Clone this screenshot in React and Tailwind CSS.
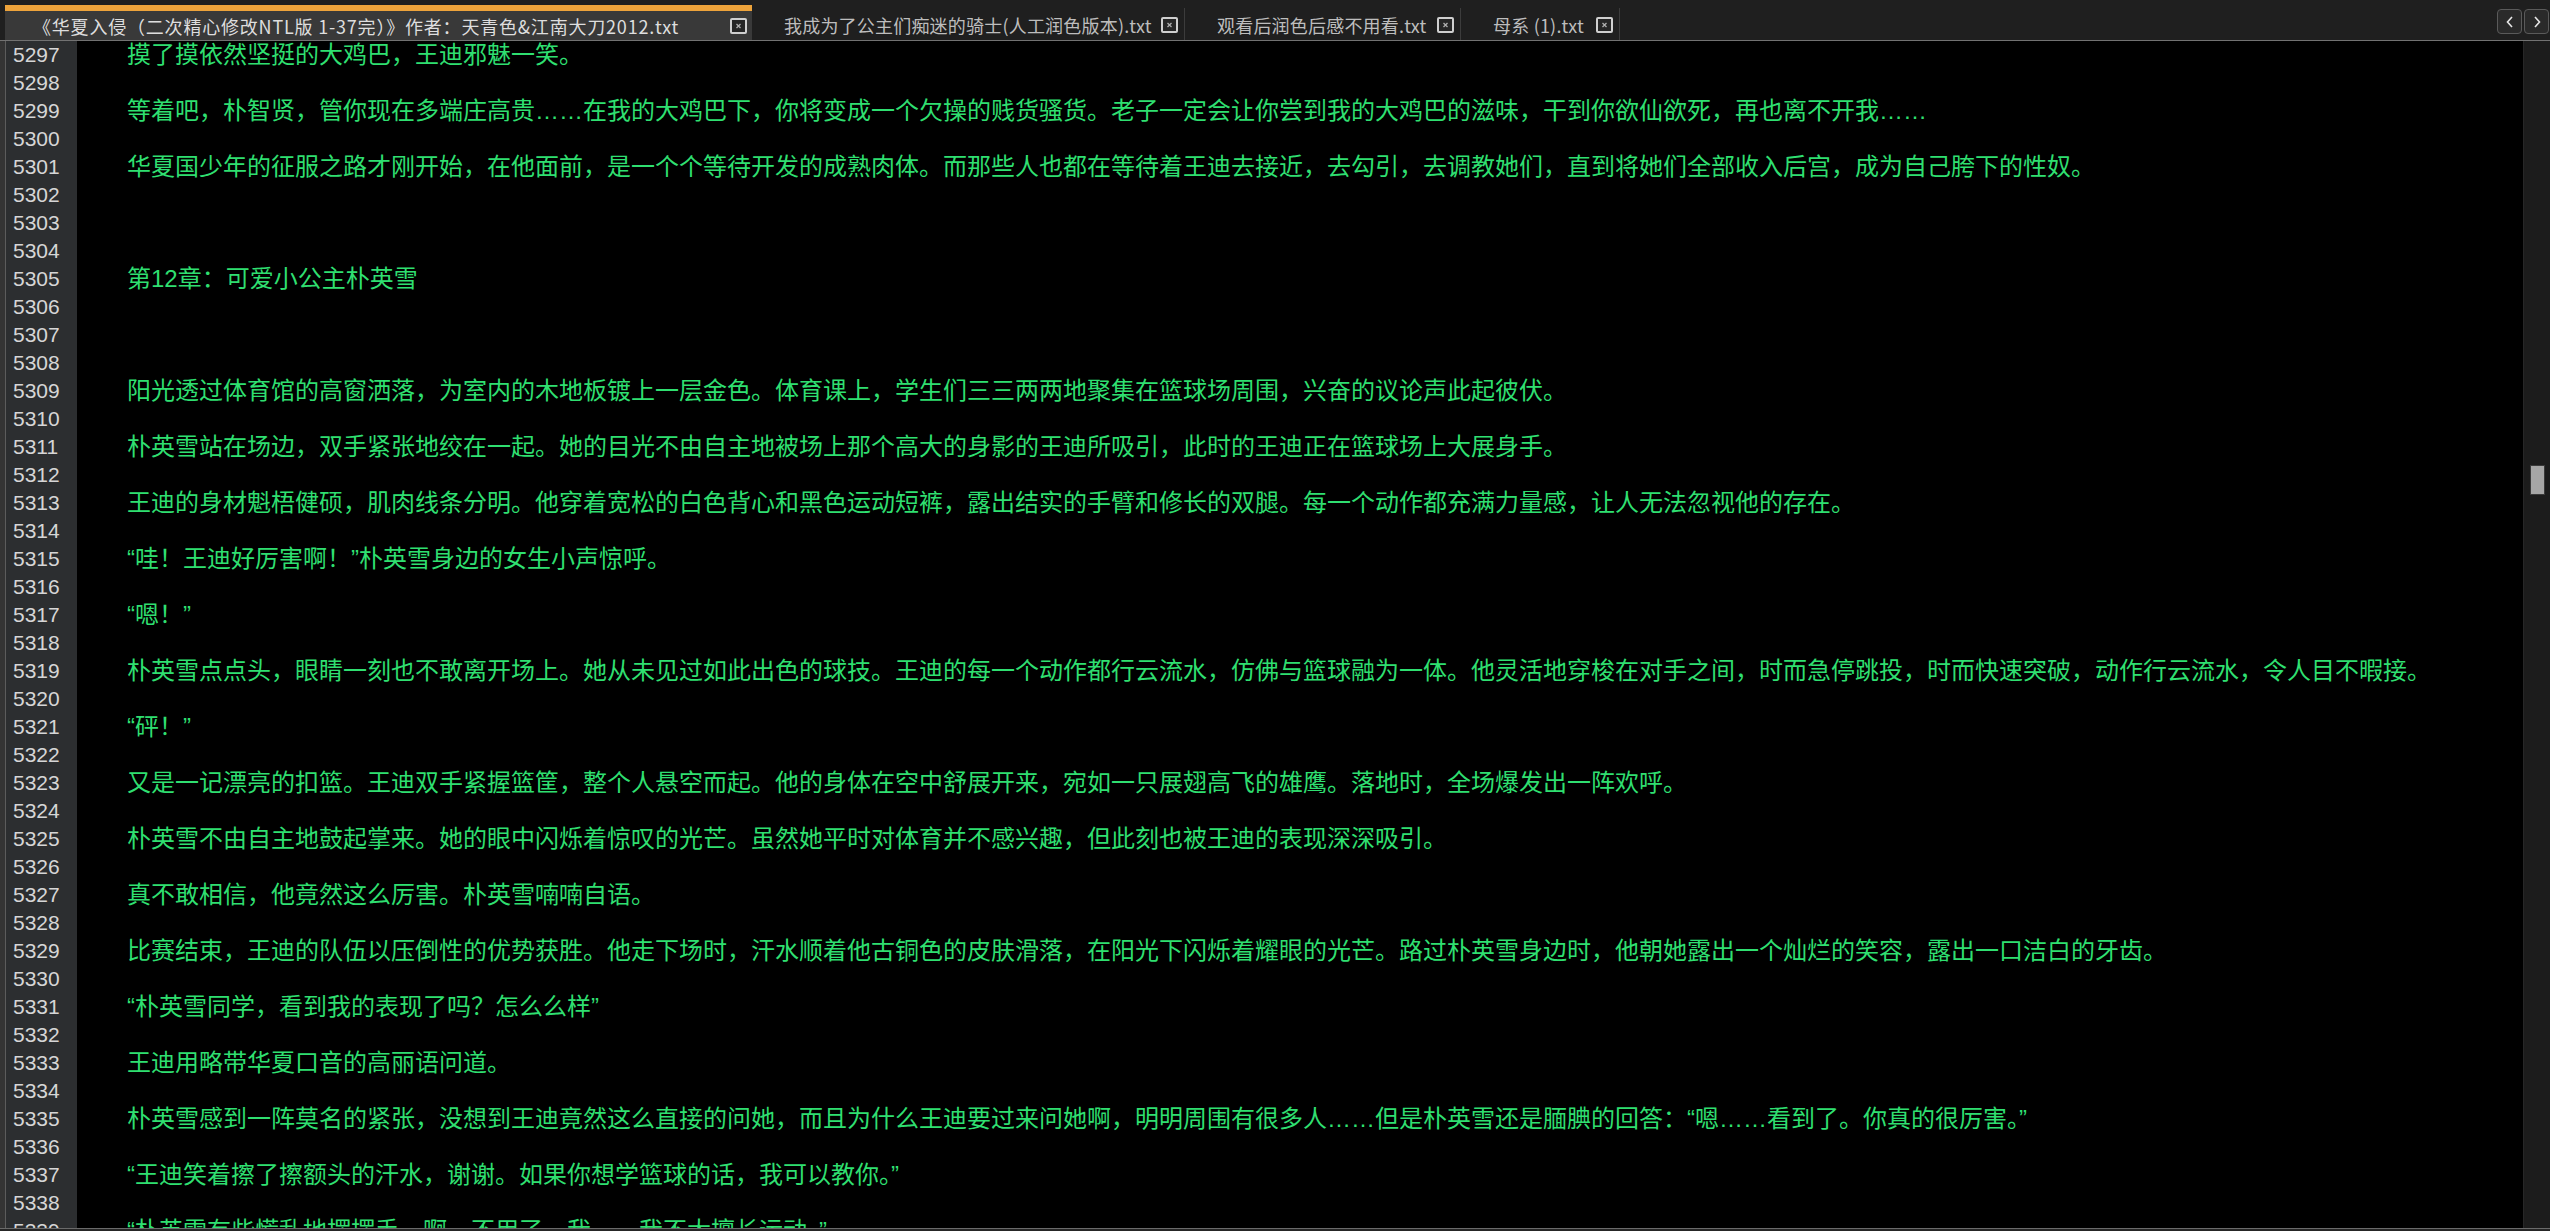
import React from "react";

const LINES = [
  "摸了摸依然坚挺的大鸡巴，王迪邪魅一笑。",
  "",
  "等着吧，朴智贤，管你现在多端庄高贵……在我的大鸡巴下，你将变成一个欠操的贱货骚货。老子一定会让你尝到我的大鸡巴的滋味，干到你欲仙欲死，再也离不开我……",
  "",
  "华夏国少年的征服之路才刚开始，在他面前，是一个个等待开发的成熟肉体。而那些人也都在等待着王迪去接近，去勾引，去调教她们，直到将她们全部收入后宫，成为自己胯下的性奴。",
  "",
  "",
  "",
  "第12章：可爱小公主朴英雪",
  "",
  "",
  "",
  "阳光透过体育馆的高窗洒落，为室内的木地板镀上一层金色。体育课上，学生们三三两两地聚集在篮球场周围，兴奋的议论声此起彼伏。",
  "",
  "朴英雪站在场边，双手紧张地绞在一起。她的目光不由自主地被场上那个高大的身影的王迪所吸引，此时的王迪正在篮球场上大展身手。",
  "",
  "王迪的身材魁梧健硕，肌肉线条分明。他穿着宽松的白色背心和黑色运动短裤，露出结实的手臂和修长的双腿。每一个动作都充满力量感，让人无法忽视他的存在。",
  "",
  "“哇！王迪好厉害啊！”朴英雪身边的女生小声惊呼。",
  "",
  "“嗯！”",
  "",
  "朴英雪点点头，眼睛一刻也不敢离开场上。她从未见过如此出色的球技。王迪的每一个动作都行云流水，仿佛与篮球融为一体。他灵活地穿梭在对手之间，时而急停跳投，时而快速突破，动作行云流水，令人目不暇接。",
  "",
  "“砰！”",
  "",
  "又是一记漂亮的扣篮。王迪双手紧握篮筐，整个人悬空而起。他的身体在空中舒展开来，宛如一只展翅高飞的雄鹰。落地时，全场爆发出一阵欢呼。",
  "",
  "朴英雪不由自主地鼓起掌来。她的眼中闪烁着惊叹的光芒。虽然她平时对体育并不感兴趣，但此刻也被王迪的表现深深吸引。",
  "",
  "真不敢相信，他竟然这么厉害。朴英雪喃喃自语。",
  "",
  "比赛结束，王迪的队伍以压倒性的优势获胜。他走下场时，汗水顺着他古铜色的皮肤滑落，在阳光下闪烁着耀眼的光芒。路过朴英雪身边时，他朝她露出一个灿烂的笑容，露出一口洁白的牙齿。",
  "",
  "“朴英雪同学，看到我的表现了吗？怎么么样”",
  "",
  "王迪用略带华夏口音的高丽语问道。",
  "",
  "朴英雪感到一阵莫名的紧张，没想到王迪竟然这么直接的问她，而且为什么王迪要过来问她啊，明明周围有很多人……但是朴英雪还是腼腆的回答：“嗯……看到了。你真的很厉害。”",
  "",
  "“王迪笑着擦了擦额头的汗水，谢谢。如果你想学篮球的话，我可以教你。”",
  "",
  "“朴英雪有些慌乱地摆摆手，啊，不用了，我……我不太擅长运动。”",
];

const FONT = { fontFamily: '"Liberation Sans", "Noto Sans CJK SC", sans-serif' };
const TAB_FONT = { fontFamily: '"Noto Sans CJK SC", "Liberation Sans", sans-serif' };

function CloseIcon() {
  return (
    <svg width="17" height="16" viewBox="0 0 17 16" className="shrink-0">
      <rect x="1" y="1" width="15" height="14" rx="1" fill="#262626" stroke="#cfcfcf" strokeWidth="2" />
      <path d="M6.5 6 L10.5 10 M10.5 6 L6.5 10" stroke="#b0b0b0" strokeWidth="1.3" />
    </svg>
  );
}

function ActiveTab({ title }) {
  return (
    <div className="ml-[5px] mt-[5px] w-[747px] h-[35px] border-t-[6px] border-[#eda33b] bg-[#393939] flex items-center pl-[28px] pr-[5px] shrink-0">
      <span className="shrink-0 text-[18px] leading-[24px] text-[#dedede] whitespace-nowrap tracking-[0.8px]" style={TAB_FONT}>{title}</span>
      <div className="flex-1" />
      <CloseIcon />
    </div>
  );
}

function Tab({ title, w }) {
  return (
    <div className="h-[40px] flex items-end shrink-0" style={{ width: w }}>
      <div className="h-[40px] flex-1 min-w-0 flex items-center pl-[32px] pr-[6px] pt-[10px]">
        <span className="shrink-0 text-[18px] leading-[24px] text-[#bdbdbd] whitespace-nowrap tracking-[0.2px]" style={TAB_FONT}>{title}</span>
        <div className="flex-1" />
        <CloseIcon />
      </div>
      <div className="w-px h-[32px] bg-[#3c3c3c]" />
    </div>
  );
}

function NavButton({ dir }) {
  return (
    <div className="w-[25px] h-[25px] rounded-[4px] border border-[#5a5a5a] bg-[#2a2a2a] flex items-center justify-center">
      <svg width="12" height="14" viewBox="0 0 12 14">
        {dir === "left" ? (
          <path d="M8 2 L3.5 7 L8 12" fill="none" stroke="#e6e6e6" strokeWidth="1.6" />
        ) : (
          <path d="M4 2 L8.5 7 L4 12" fill="none" stroke="#e6e6e6" strokeWidth="1.6" />
        )}
      </svg>
    </div>
  );
}

export default function App() {
  return (
    <div className="w-[2550px] h-[1231px] overflow-hidden bg-black flex flex-col">
      {/* Tab bar */}
      <div className="h-[41px] shrink-0 bg-[#1f1f1f] border-b border-[#727272] flex items-start">
        <ActiveTab title="《华夏入侵（二次精心修改NTL版 1-37完）》作者：天青色&amp;江南大刀2012.txt" />
        <Tab w={433} title="我成为了公主们痴迷的骑士(人工润色版本).txt" />
        <Tab w={276} title="观看后润色后感不用看.txt" />
        <Tab w={159} title="母系 (1).txt" />
        <div className="ml-auto mt-[9px] mr-[1px] flex gap-[2px]">
          <NavButton dir="left" />
          <NavButton dir="right" />
        </div>
      </div>

      {/* Editor */}
      <div className="flex-1 flex min-h-0 overflow-hidden">
        <div className="w-[5px] bg-[#343434] shrink-0" />
        <div className="w-px bg-[#5c5c5c] shrink-0" />
        <div className="w-[71px] shrink-0 bg-[#2c2e30] pl-[7px] flex flex-col">
          {LINES.map((_, i) => (
            <div key={i} className="h-[28px] leading-[28px] text-[21px] text-[#d6d6d6] shrink-0" style={{ fontFamily: '"Liberation Sans", sans-serif' }}>
              {5297 + i}
            </div>
          ))}
        </div>
        <div className="flex-1 min-w-0 bg-black pl-[50px] flex flex-col overflow-hidden">
          {LINES.map((t, i) => (
            <div key={i} className="h-[28px] leading-[28px] text-[24px] text-[#2fdf70] whitespace-nowrap shrink-0" style={FONT}>
              {t}
            </div>
          ))}
        </div>
        {/* Vertical scrollbar */}
        <div className="w-[27px] shrink-0 bg-[#1c1c1c] border-l border-[#272727] flex flex-col items-center pt-[424px]">
          <div className="w-[15px] h-[30px] bg-[#a6a6a6] border border-[#3a3a3a] ml-[1px]" />
        </div>
      </div>

      {/* Bottom edge */}
      <div className="h-[3px] shrink-0 border-t border-[#6a6a6a] bg-[#262626]" />
    </div>
  );
}
